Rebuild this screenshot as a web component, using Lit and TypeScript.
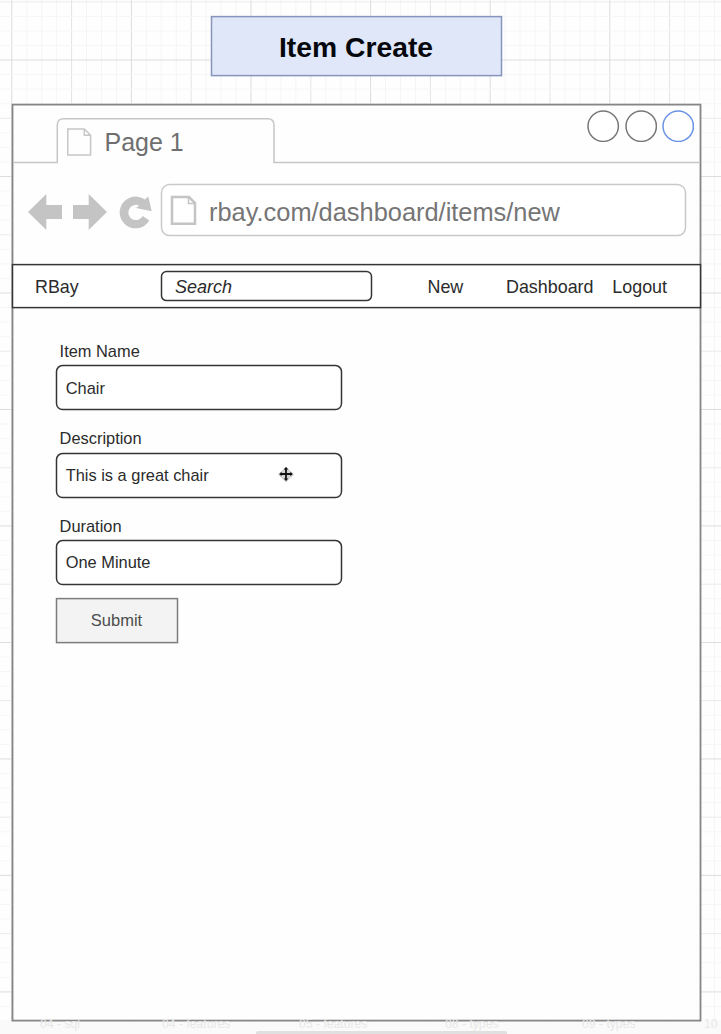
import { LitElement, html, svg, css } from "lit";
import { customElement, property } from "lit/decorators.js";

/** Outlined shape with an antialiased stroke and slotted content. */
@customElement("sketch-box")
class SketchBox extends LitElement {
  @property({ type: Number }) radius = 0;
  static styles = css`
    :host { display: grid; box-sizing: border-box; --fill: #fff; --stroke: #353535; --line: 1.5px; --align: center; --justify: flex-start; --direction: row; }
    svg { grid-area: 1 / 1; width: 100%; height: 100%; overflow: visible; min-height: 0; }
    rect { width: 100%; height: 100%; fill: var(--fill); stroke: var(--stroke); stroke-width: var(--line); transform: translate(0.5px, 0.6px); }
    .content { grid-area: 1 / 1; display: flex; align-items: var(--align); justify-content: var(--justify); flex-direction: var(--direction); min-width: 0; min-height: 0; position: relative; }
  `;
  render() {
    return html`<svg><rect rx=${this.radius} ry=${this.radius}></rect></svg>
      <div class="content"><slot></slot></div>`;
  }
}

/** Page canvas ruling: faint minor lines and stronger major lines. */
const range = (n: number) => Array.from({ length: n }, (_, i) => i);
const ruling = svg`
  ${range(49).map((i) => svg`<line x1=${11.8 + i * 14.95} x2=${11.8 + i * 14.95} y1="0" y2="1034" stroke=${i % 8 === 0 ? "#dcdcdc" : i % 4 === 0 ? "#e4e4e6" : "#f5f5f5"} />`)}
  ${range(72).map((i) => svg`<line y1=${1.8 + i * 14.56} y2=${1.8 + i * 14.56} x1="0" x2="721" stroke=${i % 8 === 4 ? "#dddddf" : i % 4 === 0 ? "#ebebeb" : "#f6f6f6"} />`)}
`;

@customElement("app-root")
class AppRoot extends LitElement {
  static styles = css`
    :host { display: block; width: 721px; height: 1034px; overflow: hidden; background: #fefefe; font-family: "Liberation Sans", Arial, sans-serif; color: #2b2b2b; }
    * { box-sizing: border-box; }
    svg { display: block; flex: none; }
    .canvas { display: grid; width: 721px; height: 1034px; }
    .ruling { grid-area: 1 / 1; }
    .page { grid-area: 1 / 1; position: relative; display: flex; flex-direction: column; padding-top: 16px; height: 1034px; }
    .title { --fill: #dfe7f8; --stroke: #8795bd; --justify: center; width: 290px; height: 59px; margin-left: 211px; font-size: 28.3px; font-weight: 700; color: #05070d; flex: none; }
    .title span { padding-top: 4px; }
    .window { --fill: #fefefe; --stroke: #868686; --line: 1.8px; --direction: column; --align: stretch; width: 688px; height: 916px; margin: 29px 0 0 12px; flex: none; }
    .strip { display: grid; height: 58px; flex: none; }
    .strip > * { grid-area: 1 / 1; }
    .strip-line { overflow: visible; }
    .strip-row { display: flex; justify-content: space-between; }
    .tab { display: flex; align-items: center; gap: 12.5px; padding: 18px 0 0 55px; font-size: 25px; color: #6f6f6f; }
    .dots { display: flex; gap: 5px; padding: 6px 5.6px 0 0; height: 40px; }
    .toolbar { display: flex; align-items: center; height: 102px; padding: 0 15px 2px 16px; flex: none; }
    .back { margin-right: 11px; }
    .forward { margin-right: 11px; }
    .reload { margin-right: 9px; }
    .address { --stroke: #c9c9c9; width: 524px; height: 51px; margin-bottom: 5px; font-size: 25.4px; color: #757575; flex: none; }
    .address svg { margin: 2px 12px 0 9px; }
    .address span { padding-top: 5px; white-space: nowrap; }
    .nav { height: 43px; font-size: 17.9px; flex: none; }
    .nav-row { display: flex; align-items: center; width: 688px; }
    .nav-row span { padding-top: 4px; }
    .brand { width: 149px; padding-left: 23px; }
    .search { width: 210px; height: 29px; font-style: italic; font-size: 18px; margin-right: 56.5px; }
    .search span { padding-left: 14px; }
    .new { width: 78.5px; }
    .dash { width: 106.3px; }
    .form { display: flex; flex-direction: column; padding: 34px 0 0 44px; font-size: 16.4px; align-items: flex-start; }
    .label { height: 24.3px; line-height: 21px; padding-left: 3.6px; }
    .field { width: 285px; height: 44px; margin-bottom: 19px; }
    .field span { padding: 2px 0 0 9.7px; }
    .pointer { position: absolute; left: 221px; top: 12px; }
    .duration { margin-bottom: 14px; }
    .submit { --fill: #f3f3f3; --stroke: #7d7d7d; --justify: center; width: 121px; height: 44px; color: #4c4c4c; font-size: 16.5px; }
    .submit span { padding-top: 2px; }
    .footer { display: flex; flex-direction: column; height: 12px; margin-top: 2px; background: #fafafa; flex: none; }
    .ghosts { display: grid; grid-template-columns: 122px 137px 146px 137px 122px auto; margin-top: -5px; padding-left: 40px; color: #e8e8e8; font-size: 12.2px; line-height: 14px; height: 14px; white-space: pre; flex: none; }
    .scroll { width: 251px; height: 3px; margin-left: 256px; border-radius: 2px 2px 0 0; background: #e0e0e0; }
  `;

  private field(label: string, value: string, last = false, cursor = false) {
    return html`<div class="label">${label}</div>
      <sketch-box class="field ${last ? "duration" : ""}" radius="6"><span>${value}</span>${cursor
        ? html`<svg class="pointer" width="18" height="18" viewBox="-9 -9 18 18">
            <path d="M0-7.5 8 .5 0 8.5-8 .5Z" fill="#d2d2d2" />
            <path d="M0-7 2.3-4.6H.9V-.9H4.4V-2.3L6.8 0 4.4 2.3V.9H.9V4.6H2.3L0 7-2.3 4.6H-.9V.9H-4.4V2.3L-6.8 0-4.4-2.3V-.9H-.9V-4.6H-2.3Z" fill="#111" />
          </svg>` : ""}</sketch-box>`;
  }

  render() {
    return html`<div class="canvas">
      <svg class="ruling" width="721" height="1034">${ruling}</svg>
      <div class="page">
        <sketch-box class="title"><span>Item Create</span></sketch-box>
        <sketch-box class="window">
          <div class="strip">
            <svg class="strip-line" width="688" height="58" fill="none" stroke="#c6c6c6" stroke-width="1.5">
              <path d="M1.3 58.6H45.3V21.2Q45.3 14.7 51.8 14.7H255.5Q262 14.7 262 21.2V58.6H687.5" />
            </svg>
            <div class="strip-row">
              <div class="tab">
                <svg width="25" height="28" viewBox="0 0 25 28" fill="none" stroke="#c6c6c6" stroke-width="1.5">
                  <path d="M.8 1H17.3L23.6 7.3V27H.8ZM17.3 1V7.3H23.6" />
                </svg>
                <span>Page 1</span>
              </div>
              <div class="dots">
                ${["#777", "#777", "#6a93e6"].map((c) => html`<svg width="32.4" height="32.4" viewBox="0 0 32.4 32.4"><circle cx="16.2" cy="16.2" r="15.2" fill="#fff" stroke=${c} stroke-width="1.5" /></svg>`)}
              </div>
            </div>
          </div>
          <div class="toolbar">
            <svg class="back" width="34" height="36" viewBox="0 0 34 36"><path d="M0 18 18.3 0V11H34V25H18.3V36Z" fill="#c4c4c4" /></svg>
            <svg class="forward" width="34" height="36" viewBox="0 0 34 36"><path d="M34 18 15.7 0V11H0V25H15.7V36Z" fill="#c4c4c4" /></svg>
            <svg class="reload" width="34" height="36" viewBox="0 0 34 36">
              <path d="M31.3 26.5A15.9 15.9 0 1 1 26.8 5.5L30.3 2.5 33.7 17.3 18 14 21.2 11.6A7.6 7.6 0 1 0 24.7 22Z" fill="#c4c4c4" />
            </svg>
            <sketch-box class="address" radius="8">
              <svg width="27" height="31" viewBox="0 0 27 31" fill="none" stroke="#c4c4c4">
                <path d="M2 2H19L25 8V28.7H2Z" stroke-width="2.5" /><path d="M18.5 2V8.5H25" stroke-width="1.5" />
              </svg><span>rbay.com/dashboard/items/new</span>
            </sketch-box>
          </div>
          <sketch-box class="nav">
            <div class="nav-row">
              <span class="brand">RBay</span>
              <sketch-box class="search" radius="5"><span>Search</span></sketch-box>
              <span class="new">New</span><span class="dash">Dashboard</span><span>Logout</span>
            </div>
          </sketch-box>
          <div class="form">
            ${this.field("Item Name", "Chair")}
            ${this.field("Description", "This is a great chair", false, true)}
            ${this.field("Duration", "One Minute", true)}
            <sketch-box class="submit"><span>Submit</span></sketch-box>
          </div>
        </sketch-box>
        <div class="footer">
          <div class="ghosts"><span>04 - sql</span><span>04 - features</span><span>05 - features</span><span>08 - types</span><span>09 - types</span><span>10</span></div>
          <div class="scroll"></div>
        </div>
      </div>
    </div>`;
  }
}
